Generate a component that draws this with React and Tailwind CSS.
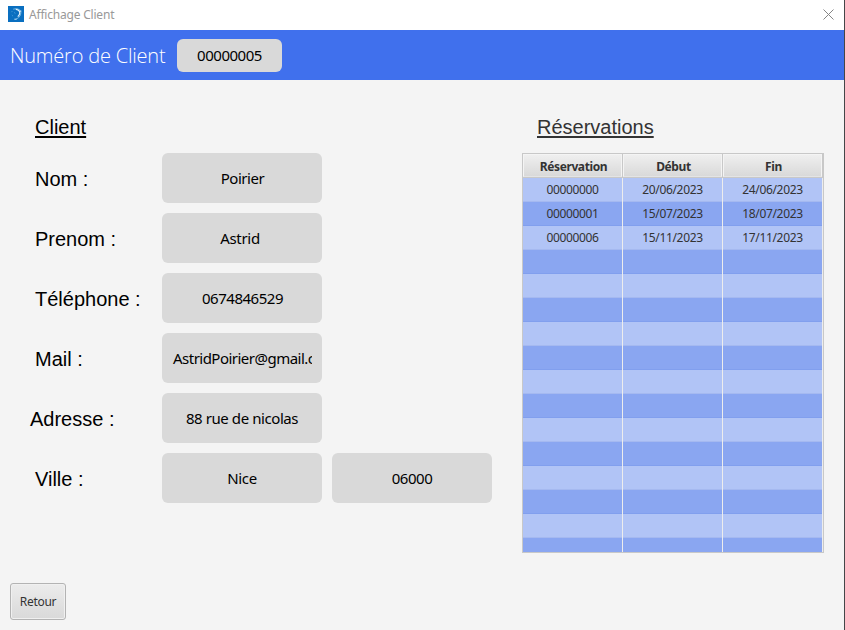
const fields = [
  { label: "Nom :", value: "Poirier", look: "tracking-[-0.45px] pl-px" },
  { label: "Prenom :", value: "Astrid", look: "tracking-[-0.3px] pr-[4px]" },
  { label: "Téléphone :", value: "0674846529", look: "tracking-[-0.48px] pl-px" },
  { label: "Mail :", value: "AstridPoirier@gmail.com", look: "tracking-[-0.52px]", clipped: true },
  { label: "Adresse :", value: "88 rue de nicolas", look: "tracking-[-0.42px]", shifted: true },
  { label: "Ville :", value: "Nice", look: "tracking-[-0.3px]", extra: "06000" },
];

const reservations = [
  ["00000000", "20/06/2023", "24/06/2023"],
  ["00000001", "15/07/2023", "18/07/2023"],
  ["00000006", "15/11/2023", "17/11/2023"],
];

const rows = Array.from({ length: 16 }, (_, i) => reservations[i] || ["", "", ""]);

function AppIcon() {
  return (
    <svg width="16" height="16" viewBox="0 0 16 16" className="shrink-0">
      <rect width="16" height="16" fill="#0a6fc0" />
      <path d="M5.2 3.2Q9 1.6 11.8 3.8Q13.8 6.4 12.4 9.4Q11 12.2 7.6 13.3" fill="none" stroke="#6db1df" strokeWidth="1" />
      <path d="M7.8 3.4Q11.6 3.8 11.8 6.8Q11.8 8.8 9.8 10.6" fill="none" stroke="#e4f2fb" strokeWidth="1.2" />
      <path d="M3.4 6.2L4.4 5M3.8 9L5 10.2M6 6.4L7.4 7.4" stroke="#4e9fd8" strokeWidth="0.8" />
      <path d="M6.3 13.2H8.6M12.8 4.4V6" stroke="#cfe8f7" strokeWidth="0.9" />
    </svg>
  );
}

function ValueBox({ children, look = "", clipped }) {
  return (
    <div className="flex h-[50px] w-40 shrink-0 items-center rounded-[6px] bg-[#d9d9d9] px-[10px] text-[15px] text-black">
      <div className={`w-full overflow-hidden whitespace-nowrap leading-6 ${clipped ? "pl-px text-left" : "text-center"} ${look}`}>
        {children}
      </div>
    </div>
  );
}

export default function App() {
  return (
    <div className="flex h-[630px] w-[845px] flex-col overflow-hidden border-r border-[#444648] bg-[#f4f4f4] font-['Noto_Sans','Open_Sans',sans-serif]">
      <div className="flex h-[30px] shrink-0 items-center bg-white pl-2 pr-[10px] pb-[2px]">
        <AppIcon />
        <span className="ml-[5px] mt-[2px] text-[12px] leading-4 tracking-[-0.2px] text-[#999]">Affichage Client</span>
        <svg width="11" height="11" viewBox="0 0 11 11" className="ml-auto">
          <path d="M0.5 0.5L10.5 10.5M10.5 0.5L0.5 10.5" stroke="#858585" strokeWidth="1" />
        </svg>
      </div>

      <header className="flex h-[50px] shrink-0 items-center bg-[#4070ed] pl-[10px] pt-px">
        <span className="w-[167px] whitespace-nowrap pt-px font-['Open_Sans','Noto_Sans',sans-serif] text-[20px] font-[350] leading-7 tracking-[-0.2px] text-white">Numéro de Client</span>
        <div className="flex h-[33px] w-[105px] items-center justify-center rounded-[6px] bg-[#d9d9d9] text-[15px] tracking-[-0.48px] text-black">
          00000005
        </div>
      </header>

      <main className="flex h-[473px] shrink-0 pt-[34px]">
        <section className="w-[522px] shrink-0 font-['Liberation_Sans',Arial,sans-serif] text-[20px] text-black">
          <h2 className="h-[39px] pl-[35px] leading-[26px] underline decoration-[1.5px] underline-offset-2">Client</h2>
          <div className="flex flex-col gap-[10px]">
            {fields.map((f) => (
              <div key={f.label} className="flex items-center gap-[10px]">
                <div className={`w-[152px] shrink-0 pt-[2px] ${f.shifted ? "pl-[30px]" : "pl-[35px]"}`}>{f.label}</div>
                <div className="flex gap-[10px] font-['Noto_Sans','Open_Sans',sans-serif]">
                  <ValueBox look={f.look} clipped={f.clipped}>{f.value}</ValueBox>
                  {f.extra && <ValueBox look="tracking-[-0.48px]">{f.extra}</ValueBox>}
                </div>
              </div>
            ))}
          </div>
        </section>

        <section className="w-[302px]">
          <h2 className="h-[39px] pl-[15px] font-['Liberation_Sans',Arial,sans-serif] text-[20px] leading-[26px] text-[#333] underline decoration-[1.5px] underline-offset-2">
            Réservations
          </h2>
          <div className="h-[400px] overflow-hidden border border-[#c8c8c8] bg-[#f4f4f4] text-[12px] text-[#333]">
            <div className="flex h-6 border-b border-[#c8c8c8] font-bold tracking-[-0.4px]">
              {["Réservation", "Début", "Fin"].map((h) => (
                <div key={h} className="w-[100px] border-r border-[#c8c8c8]">
                  <div className="flex h-full items-center justify-center border border-[#f4f4f4] border-b-[#e4e4e4] bg-gradient-to-b from-[#efefef] to-[#d9d9d9] pl-[2px] pt-[3px] leading-4">
                    {h}
                  </div>
                </div>
              ))}
            </div>
            {rows.map((r, i) => (
              <div key={i} className={`flex h-6 w-[300px] border-b ${i % 2 ? "border-[#819fee] bg-[#8aa6f1]" : "border-[#a5b9f0] bg-[#b1c4f6]"}`}>
                {r.map((c, j) => (
                  <div key={j} className="-mb-px flex w-[100px] items-center justify-center border-r border-[#ededed] tracking-[-0.35px]">
                    {c}
                  </div>
                ))}
              </div>
            ))}
          </div>
        </section>
      </main>

      <footer className="pl-[10px] pt-[30px]">
        <button className="h-[37px] w-[56px] rounded-[3px] border border-[#b3b3b3] bg-gradient-to-b from-[#ececec] to-[#d9d9d9] text-[12px] tracking-[-0.3px] text-[#333] shadow-[inset_0_0_0_1px_#f0f0f0]">
          Retour
        </button>
      </footer>
    </div>
  );
}
